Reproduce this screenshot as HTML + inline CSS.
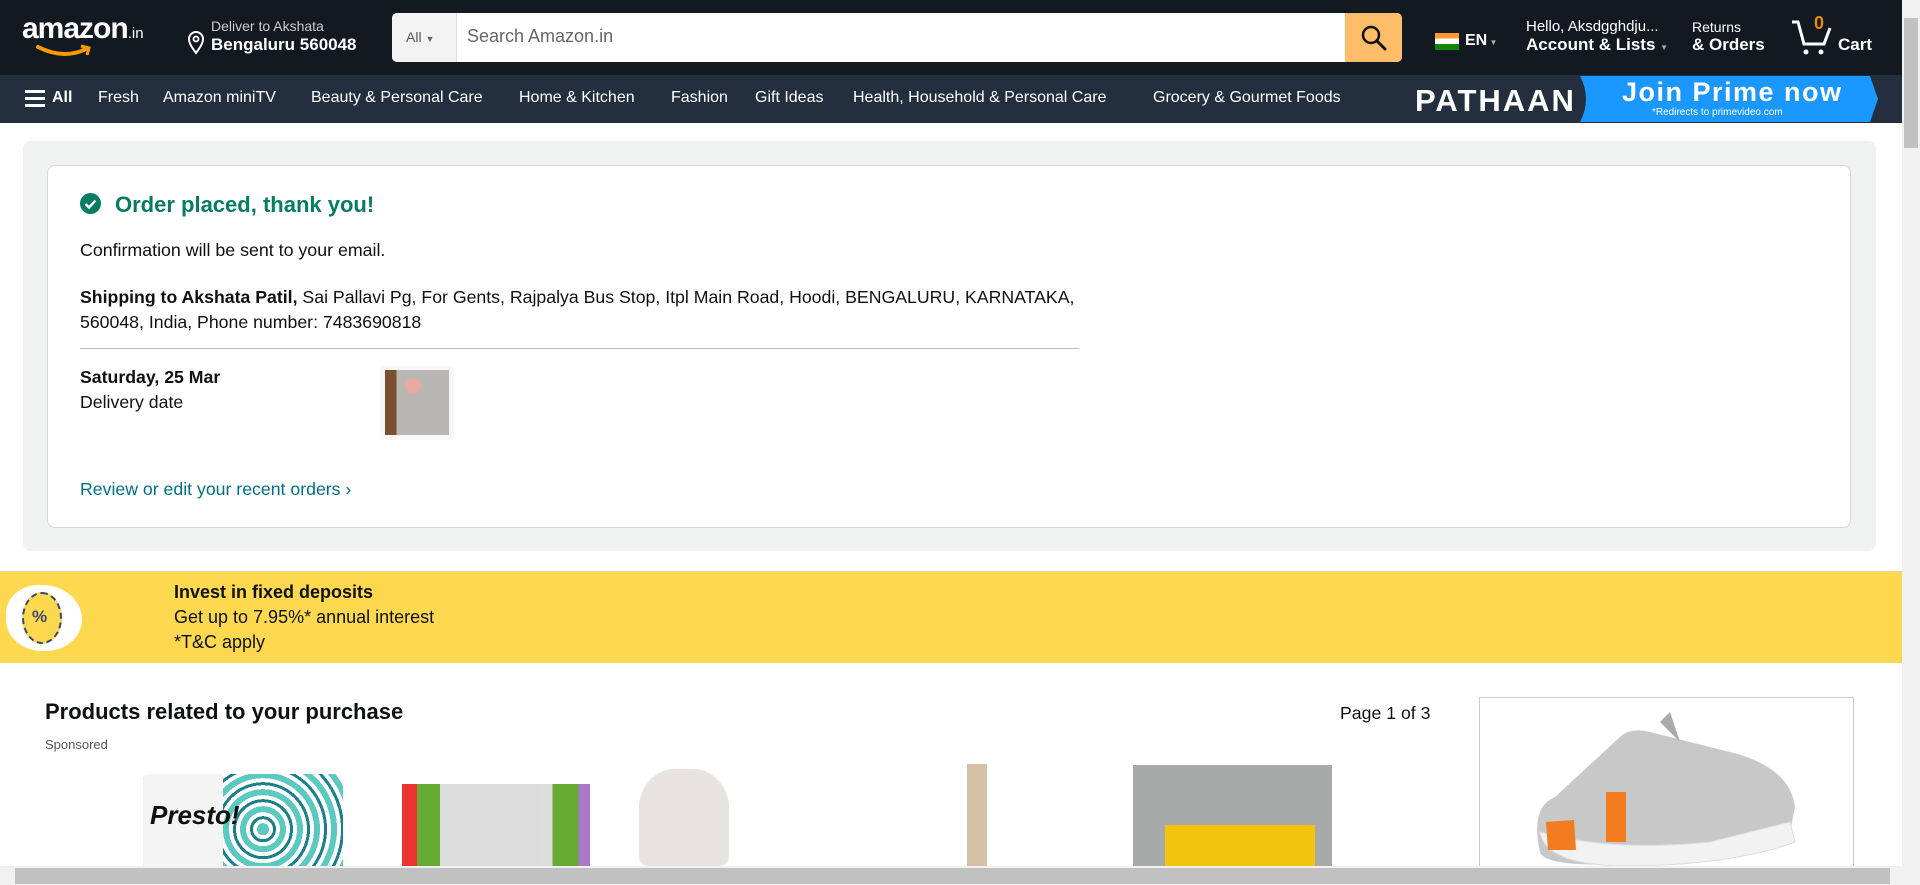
<!DOCTYPE html>
<html><head><meta charset="utf-8"><style>
*{margin:0;padding:0;box-sizing:border-box}
body{width:1920px;height:885px;overflow:hidden;font-family:"Liberation Sans",Arial,sans-serif;background:#fff;position:relative;color:#0f1111}
.a{position:absolute;white-space:nowrap}
#top{position:absolute;left:0;top:0;width:1902px;height:75px;background:#131921;color:#fff}
#sub{position:absolute;left:0;top:75px;width:1902px;height:48px;background:#232f3e;color:#fff;font-size:16px}
#sub .a{top:14px}
</style></head><body>
<div id="top">
 <div class="a" style="left:22px;top:12px;font-size:30px;font-weight:bold;letter-spacing:-1px">amazon<span style="font-size:15px;font-weight:normal;letter-spacing:0">.in</span></div>
 <svg class="a" style="left:36px;top:44px" width="58" height="16"><path d="M2 3 Q28 16 50 5" stroke="#ff9900" stroke-width="4" fill="none" stroke-linecap="round"/><path d="M45 2 L53 4 L51 11" stroke="#ff9900" stroke-width="3" fill="none"/></svg>
 <svg class="a" style="left:187px;top:31px" width="18" height="24"><path d="M9 22 C3 14 2 11 2 8 A7 7 0 0 1 16 8 C16 11 15 14 9 22Z" fill="none" stroke="#fff" stroke-width="2"/><circle cx="9" cy="8" r="2.5" fill="none" stroke="#fff" stroke-width="1.8"/></svg>
 <div class="a" style="left:211px;top:18px;font-size:14px;color:#ccc">Deliver to Akshata</div>
 <div class="a" style="left:211px;top:35px;font-size:17px;font-weight:bold">Bengaluru 560048</div>
 <div class="a" style="left:392px;top:13px;width:1010px;height:49px;background:#fff;border-radius:5px;overflow:hidden">
  <div class="a" style="left:0;top:0;width:65px;height:49px;background:#f3f3f3;border-right:1px solid #ddd;color:#555;font-size:14px;padding:16px 0 0 14px">All <span style="font-size:9px;color:#666">&#9660;</span></div>
  <div class="a" style="left:75px;top:13px;color:#666;font-size:18px">Search Amazon.in</div>
  <div class="a" style="left:953px;top:0;width:57px;height:49px;background:#febd69"></div>
  <svg class="a" style="left:968px;top:11px" width="28" height="28"><circle cx="11" cy="11" r="8" fill="none" stroke="#111" stroke-width="2.5"/><path d="M17 17 L25 25" stroke="#111" stroke-width="3" stroke-linecap="round"/></svg>
 </div>
 <div class="a" style="left:1435px;top:33px;width:24px;height:17px;background:linear-gradient(#f93 0 33%,#fff 33% 66%,#138808 66%)"></div>
 <div class="a" style="left:1465px;top:32px;font-size:16px;font-weight:bold">EN<span style="font-size:8px;color:#aaa"> &#9660;</span></div>
 <div class="a" style="left:1526px;top:18px;font-size:15px">Hello, Aksdgghdju...</div>
 <div class="a" style="left:1526px;top:35px;font-size:17px;font-weight:bold">Account &amp; Lists <span style="font-size:8px;color:#aaa">&#9660;</span></div>
 <div class="a" style="left:1692px;top:19px;font-size:14px">Returns</div>
 <div class="a" style="left:1692px;top:35px;font-size:17px;font-weight:bold">&amp; Orders</div>
 <svg class="a" style="left:1790px;top:18px" width="48" height="38"><path d="M2 4 L8 4 L14 26 L34 26 L40 10" fill="none" stroke="#fff" stroke-width="3"/><circle cx="16" cy="34" r="2.5" fill="#fff"/><circle cx="31" cy="34" r="2.5" fill="#fff"/></svg>
 <div class="a" style="left:1814px;top:13px;font-size:18px;font-weight:bold;color:#f08804">0</div>
 <div class="a" style="left:1838px;top:35px;font-size:17px;font-weight:bold">Cart</div>
</div>
<div id="sub">
 <div class="a" style="left:25px;top:15px;width:20px;height:3px;background:#fff;box-shadow:0 7px #fff,0 14px #fff"></div>
 <div class="a" style="left:52px;font-weight:bold">All</div>
 <div class="a" style="left:98px">Fresh</div>
 <div class="a" style="left:163px">Amazon miniTV</div>
 <div class="a" style="left:311px">Beauty &amp; Personal Care</div>
 <div class="a" style="left:519px">Home &amp; Kitchen</div>
 <div class="a" style="left:671px">Fashion</div>
 <div class="a" style="left:755px">Gift Ideas</div>
 <div class="a" style="left:853px">Health, Household &amp; Personal Care</div>
 <div class="a" style="left:1153px">Grocery &amp; Gourmet Foods</div>
 <div class="a" style="left:1415px;top:8px;font-size:31px;font-weight:bold;letter-spacing:2px">PATHAAN</div>
 <svg class="a" style="left:1580px;top:1px" width="300" height="46"><path d="M0 0 L290 0 L298 23 L290 46 L0 46 Q12 23 0 0Z" fill="#1a98ff"/></svg>
 <div class="a" style="left:1622px;top:2px;font-size:27px;font-weight:bold;letter-spacing:1.5px">Join Prime now</div>
 <div class="a" style="left:1652px;top:32px;font-size:10px">*Redirects to primevideo.com</div>
</div>

<div class="a" style="left:23px;top:141px;width:1853px;height:410px;background:#f0f2f2;border-radius:8px"></div>
<div class="a" style="left:47px;top:165px;width:1804px;height:363px;background:#fff;border:1px solid #d5d9d9;border-radius:8px"></div>
<svg class="a" style="left:80px;top:193px" width="21" height="21"><circle cx="10.5" cy="10.5" r="10.5" fill="#067d62"/><path d="M5.5 11 L9 14.5 L15.5 7.5" stroke="#fff" stroke-width="2.4" fill="none"/></svg>
<div class="a" style="left:115px;top:192px;font-size:22px;font-weight:bold;color:#067d62">Order placed, thank you!</div>
<div class="a" style="left:80px;top:240px;font-size:17.8px">Confirmation will be sent to your email.</div>
<div class="a" style="left:80px;top:285px;font-size:17.7px;line-height:25px"><b>Shipping to Akshata Patil,</b> Sai Pallavi Pg, For Gents, Rajpalya Bus Stop, Itpl Main Road, Hoodi, BENGALURU, KARNATAKA,<br>560048, India, Phone number: 7483690818</div>
<div class="a" style="left:80px;top:348px;width:999px;height:1px;background:#bbb"></div>
<div class="a" style="left:80px;top:367px;font-size:17.7px;font-weight:bold">Saturday, 25 Mar</div>
<div class="a" style="left:80px;top:392px;font-size:17.7px">Delivery date</div>
<div class="a" style="left:380px;top:366px;width:74px;height:74px;background:#f7f7f7;border-radius:4px"></div>
<div class="a" style="left:385px;top:370px;width:64px;height:65px;background:linear-gradient(90deg,#7a5030 0 18%,#b9b7b3 18%);"></div>
<div class="a" style="left:405px;top:378px;width:16px;height:16px;border-radius:50%;background:#e7a9a0"></div>
<div class="a" style="left:80px;top:479px;font-size:17.7px;color:#007185">Review or edit your recent orders ›</div>

<div class="a" style="left:0;top:571px;width:1902px;height:92px;background:#fed84f;border-top:1px solid #e5d9a0"></div>
<div class="a" style="left:6px;top:585px;width:76px;height:66px;background:#fff;border-radius:45% 55% 50% 50%"></div>
<div class="a" style="left:22px;top:592px;width:40px;height:52px;border:2px dashed #3b4a6b;border-radius:50%;background:#fed84f"></div>
<div class="a" style="left:32px;top:607px;font-size:17px;font-weight:bold;color:#3b4a6b">%</div>
<div class="a" style="left:174px;top:582px;font-size:18px;font-weight:bold">Invest in fixed deposits</div>
<div class="a" style="left:174px;top:607px;font-size:18px">Get up to 7.95%* annual interest</div>
<div class="a" style="left:174px;top:632px;font-size:18px">*T&amp;C apply</div>

<div class="a" style="left:45px;top:699px;font-size:22px;font-weight:bold">Products related to your purchase</div>
<div class="a" style="left:45px;top:737px;font-size:13px;color:#555">Sponsored</div>
<div class="a" style="left:1340px;top:703px;font-size:17.7px">Page 1 of 3</div>
<div class="a" style="left:1479px;top:697px;width:375px;height:175px;border:1px solid #ccc"></div>
<svg class="a" style="left:1510px;top:712px" width="310" height="154" viewBox="0 0 310 154"><path d="M30 140 Q20 95 45 85 L110 25 Q120 15 140 20 L220 40 Q280 55 285 95 L280 120 Q240 150 110 152 Q35 155 30 140Z" fill="#c8c8c8"/><path d="M30 120 Q100 140 200 130 L280 110 L285 130 Q220 154 110 154 Q35 152 30 120Z" fill="#f2f2f2" stroke="#ddd"/><rect x="96" y="80" width="20" height="50" fill="#f47c20"/><path d="M36 110 L38 138 L66 138 L64 108Z" fill="#f47c20"/><path d="M150 10 L160 0 L170 30Z" fill="#aaa"/></svg>
<div class="a" style="left:143px;top:774px;width:200px;height:92px;background:repeating-radial-gradient(circle at 60% 60%,#5cc9c1 0 6px,#fff 6px 10px,#1a7f8a 10px 13px,#fff 13px 17px);border-radius:6px 6px 0 0"></div>
<div class="a" style="left:143px;top:774px;width:80px;height:92px;background:#f4f4f4;border-radius:6px 0 0 0"></div>
<div class="a" style="left:150px;top:800px;font-size:26px;font-style:italic;font-weight:bold">Presto!</div>
<div class="a" style="left:402px;top:784px;width:188px;height:82px;background:linear-gradient(90deg,#e33 0 8%,#6a3 8% 22%,#ddd 22% 80%,#6a3 80% 94%,#a7c 94%)"></div>
<div class="a" style="left:440px;top:784px;width:100px;height:82px;background:#dcdcdc"></div>
<div class="a" style="left:639px;top:769px;width:90px;height:97px;background:#e7e4df;border-radius:40% 40% 10% 10%"></div>
<div class="a" style="left:967px;top:764px;width:20px;height:102px;background:#d7c1a6"></div>
<div class="a" style="left:1133px;top:765px;width:199px;height:101px;background:#a8a9a9"></div>
<div class="a" style="left:1165px;top:825px;width:150px;height:41px;background:#f2c40b"></div>

<div class="a" style="left:1902px;top:0;width:18px;height:885px;background:#f1f1f1"></div>
<div class="a" style="left:1904px;top:18px;width:14px;height:130px;background:#c1c1c1"></div>
<div class="a" style="left:0;top:866px;width:1902px;height:19px;background:#f1f1f1"></div>
<div class="a" style="left:15px;top:868px;width:1875px;height:16px;background:#c1c1c1"></div>
</body></html>
